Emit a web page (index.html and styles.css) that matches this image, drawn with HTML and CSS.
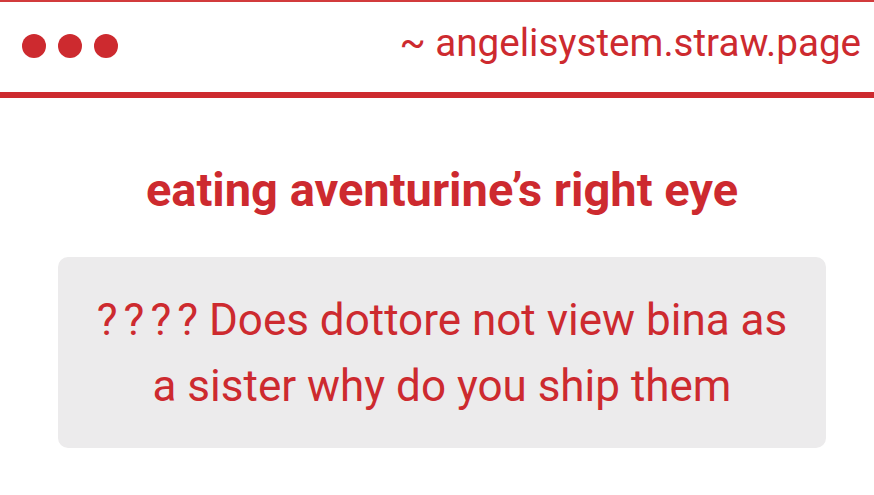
FILE: index.html
```html
<!DOCTYPE html>
<html lang="en">
  <head>
    <meta charset="UTF-8" />
    <meta name="viewport" content="width=device-width, initial-scale=1.0" />
    <link rel="stylesheet" href="styles.css">
    <title>angelisystem.straw.page</title>
  </head>
  <body>
    <!-- 上のバー -->
    <header class="topbar">
      <div class="dots">
        <span class="dot"></span>
        <span class="dot"></span>
        <span class="dot"></span>
      </div>
      <div class="site">~ angelisystem.straw.page</div>
    </header>

    <main class="content">
      <h1 class="title">eating aventurine’s right eye</h1>
      <div class="message">
        <p><span class="marks">???</span>? Does dottore not view bina as<br />a sister why do you ship them</p>
      </div>
    </main>
  </body>
</html>
```

FILE: styles.css
```css
/* 基本設定 */
* {
  margin: 0;
  padding: 0;
  box-sizing: border-box;
}

body {
  font-family: Roboto, "Liberation Sans", Arial, sans-serif;
  background-color: #fff;
  color: #cd2a2f;
  border-top: 2px solid #d23b3c;
}

/* ヘッダー */
.topbar {
  height: 96px;
  display: flex;
  align-items: center;
  justify-content: space-between;
  padding: 0 13px 2px 22px;
  border-bottom: 6px solid #cd2a2f;
}

.dots {
  display: flex;
  gap: 12px;
}

.dot {
  width: 24px;
  height: 24px;
  border-radius: 50%;
  background-color: #cd2a2f;
}

.site {
  font-size: 38.6px;
  margin-bottom: 8px;
}

/* 本文 */
.content {
  padding: 0 48px 0 58px;
}

.title {
  font-size: 47px;
  font-weight: bold;
  text-align: center;
  padding-top: 64px;
  line-height: 56px;
  margin-bottom: 39px;
}

.message {
  background-color: #ecebec;
  border-radius: 10px;
  height: 191px;
  display: flex;
  align-items: center;
  justify-content: center;
}

.message p {
  font-size: 44px;
  line-height: 66px;
  text-align: center;
}

.marks {
  letter-spacing: 6px;
}
```
